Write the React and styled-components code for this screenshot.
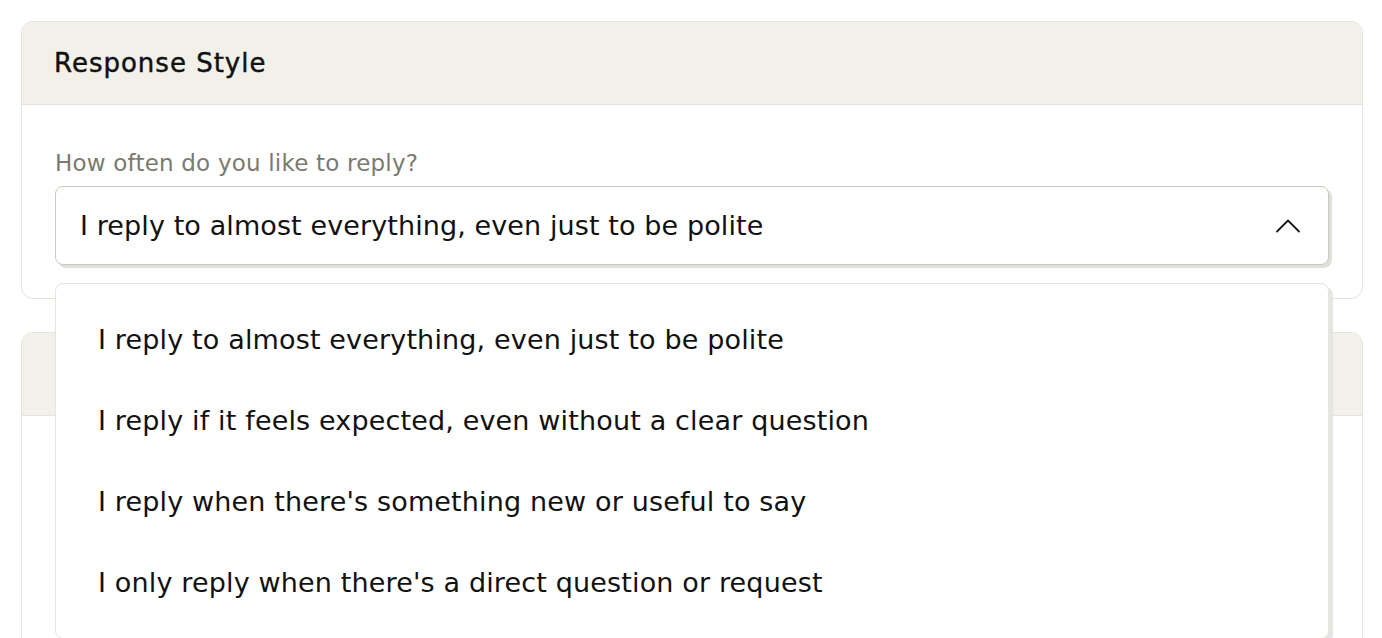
import React, { useState } from "react";
import styled, { createGlobalStyle } from "styled-components";

const GlobalStyle = createGlobalStyle`
  html, body {
    margin: 0;
    padding: 0;
    background: #ffffff;
  }
  body {
    font-family: "DejaVu Sans", "Open Sans", sans-serif;
    color: #111111;
    overflow: hidden;
  }
  * { box-sizing: border-box; }
`;

const Page = styled.div`
  display: flex;
  flex-direction: column;
  gap: 33px;
  padding: 21px 19px 0 21px;
`;

const Card = styled.section`
  position: relative;
  z-index: ${(p) => p.$z || 0};
  border: 1px solid #e4e4dc;
  border-radius: 12px;
  background: #ffffff;
`;

const CardHeader = styled.header`
  display: flex;
  align-items: center;
  height: 83px;
  padding: 0 32px;
  background: #f1f1e9;
  border-bottom: 1px solid #e4e4dc;
  border-radius: 11px 11px 0 0;
`;

const CardTitle = styled.h2`
  margin: 0;
  font-size: 26px;
  font-weight: 400;
  letter-spacing: 1px;
  -webkit-text-stroke: 0.45px currentColor;
  color: #111111;
`;

const CardBody = styled.div`
  padding: ${(p) => p.$padding || "43px 33px 33px"};
  min-height: ${(p) => p.$minHeight || "auto"};
`;

const FieldLabel = styled.label`
  display: block;
  font-size: 23px;
  line-height: 30px;
  letter-spacing: 0.2px;
  color: #7a7a6f;
  margin-bottom: 8px;
`;

const SelectWrap = styled.div`
  position: relative;
`;

const SelectButton = styled.button`
  display: flex;
  align-items: center;
  justify-content: space-between;
  width: 100%;
  height: 79px;
  padding: 0 28px 0 24px;
  border: 1.5px solid #c9c9bd;
  border-radius: 8px;
  background: #ffffff;
  box-shadow: 3px 3px 0 #e0e0dc;
  font-family: inherit;
  font-size: 27px;
  letter-spacing: 0.1px;
  color: #111111;
  text-align: left;
  cursor: pointer;
`;

const Menu = styled.ul`
  position: absolute;
  top: calc(100% + 18px);
  left: 0;
  right: 0;
  margin: 0;
  padding: 15px 0;
  list-style: none;
  background: #ffffff;
  border: 1px solid #e6e6df;
  border-radius: 8px;
  box-shadow: 4px 4px 0 #e5e5e3;
`;

const MenuItem = styled.li`
  display: flex;
  align-items: center;
  height: 81px;
  padding: 0 42px;
  font-size: 27px;
  letter-spacing: 0.15px;
  color: #111111;
  cursor: pointer;
`;

const Chevron = ({ open }) => (
  <svg width="24" height="14" viewBox="0 0 24 14" fill="none" aria-hidden="true">
    <polyline
      points={open ? "1,12.5 12,1.5 23,12.5" : "1,1.5 12,12.5 23,1.5"}
      stroke="#1a1a1a"
      strokeWidth="1.8"
      strokeLinecap="round"
      strokeLinejoin="round"
    />
  </svg>
);

const options = [
  "I reply to almost everything, even just to be polite",
  "I reply if it feels expected, even without a clear question",
  "I reply when there's something new or useful to say",
  "I only reply when there's a direct question or request",
];

export default function App() {
  const [open, setOpen] = useState(true);
  const [value, setValue] = useState(options[0]);

  return (
    <>
      <GlobalStyle />
      <Page>
        <Card $z={2}>
          <CardHeader>
            <CardTitle>Response Style</CardTitle>
          </CardHeader>
          <CardBody>
            <FieldLabel>How often do you like to reply?</FieldLabel>
            <SelectWrap>
              <SelectButton onClick={() => setOpen((o) => !o)}>
                <span>{value}</span>
                <Chevron open={open} />
              </SelectButton>
              {open && (
                <Menu>
                  {options.map((opt) => (
                    <MenuItem
                      key={opt}
                      onClick={() => {
                        setValue(opt);
                        setOpen(false);
                      }}
                    >
                      {opt}
                    </MenuItem>
                  ))}
                </Menu>
              )}
            </SelectWrap>
          </CardBody>
        </Card>
        <Card $z={1}>
          <CardHeader />
          <CardBody $minHeight="300px" />
        </Card>
      </Page>
    </>
  );
}
